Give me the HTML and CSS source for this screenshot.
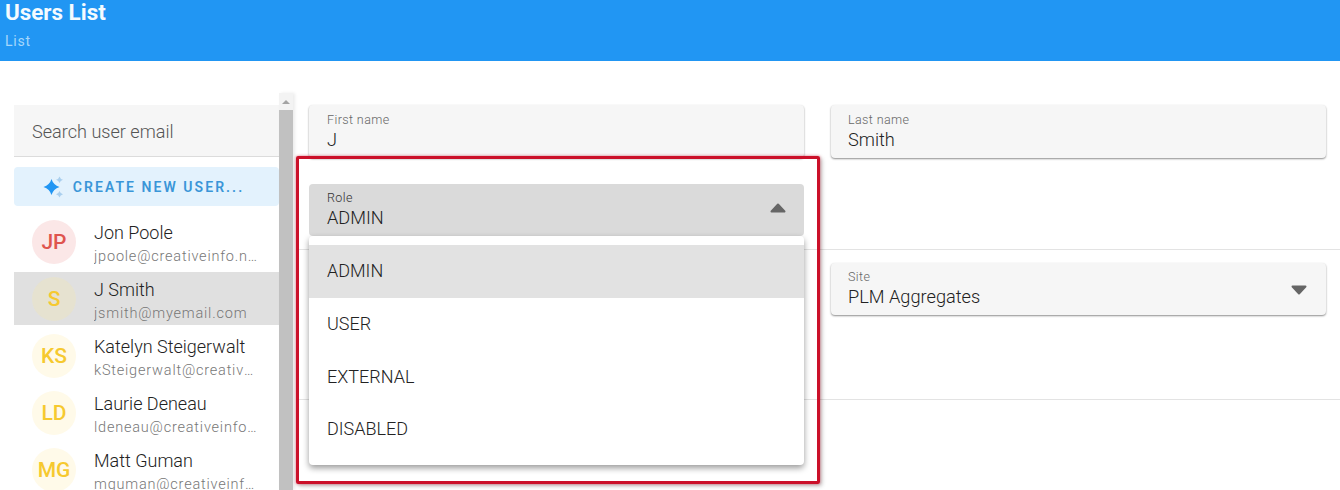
FILE: index.html
```html
<!DOCTYPE html>
<html lang="en">
<head>
<meta charset="utf-8">
<title>Users List</title>
<link rel="stylesheet" href="styles.css">
</head>
<body>
<header class="topbar">
  <h1 class="topbar-title">Users List</h1>
  <p class="topbar-sub">List</p>
</header>
<div class="page">
  <aside class="side">
    <div class="side-col">
      <div class="search">Search user email</div>
      <button class="create">
        <svg class="spark" viewBox="0 0 22 22" width="22" height="22" aria-hidden="true">
          <path class="spark-main" d="M9.5 3 Q11.2 8.8 17.5 11 Q11.2 13.2 9.5 19 Q7.8 13.2 1.5 11 Q7.8 8.8 9.5 3Z"/>
          <path class="spark-sub" d="M17.5 0.5 Q18.2 3 21 3.8 Q18.2 4.6 17.5 7.1 Q16.8 4.6 14 3.8 Q16.8 3 17.5 0.5Z"/>
          <path class="spark-sub" d="M17.5 15 Q18.2 17.4 21 18.2 Q18.2 19 17.5 21.5 Q16.8 19 14 18.2 Q16.8 17.4 17.5 15Z"/>
        </svg>
        <span>CREATE NEW USER...</span>
      </button>
      <ul class="users">
        <li class="user">
          <span class="avatar avatar-red">JP</span>
          <div class="user-text"><div class="user-name">Jon Poole</div><div class="user-mail">jpoole@creativeinfo.net</div></div>
        </li>
        <li class="user user-active">
          <span class="avatar avatar-yellow">S</span>
          <div class="user-text"><div class="user-name">J Smith</div><div class="user-mail">jsmith@myemail.com</div></div>
        </li>
        <li class="user">
          <span class="avatar avatar-yellow">KS</span>
          <div class="user-text"><div class="user-name">Katelyn Steigerwalt</div><div class="user-mail">kSteigerwalt@creativeinfo.net</div></div>
        </li>
        <li class="user">
          <span class="avatar avatar-yellow">LD</span>
          <div class="user-text"><div class="user-name">Laurie Deneau</div><div class="user-mail">ldeneau@creativeinfo.net</div></div>
        </li>
        <li class="user">
          <span class="avatar avatar-yellow">MG</span>
          <div class="user-text"><div class="user-name">Matt Guman</div><div class="user-mail">mguman@creativeinfo.net</div></div>
        </li>
      </ul>
    </div>
    <div class="scrollbar">
      <div class="scroll-btn"><span class="scroll-arrow"></span></div>
      <div class="scroll-thumb"></div>
    </div>
  </aside>
  <main class="main">
    <section class="section section-first">
      <div class="field field-top">
        <div>
          <span class="field-label">First name</span>
          <span class="field-value">J</span>
        </div>
      </div>
      <div class="field field-top field-right">
        <div>
          <span class="field-label">Last name</span>
          <span class="field-value">Smith</span>
        </div>
      </div>
      <div class="field field-open">
        <div>
          <span class="field-label">Role</span>
          <span class="field-value">ADMIN</span>
        </div>
        <svg class="caret caret-up" viewBox="0 0 16 10" width="16" height="10" aria-hidden="true"><path d="M8 1.5 L14.5 8.5 H1.5Z"/></svg>
        <ul class="menu">
          <li class="menu-item menu-item-active">ADMIN</li>
          <li class="menu-item">USER</li>
          <li class="menu-item">EXTERNAL</li>
          <li class="menu-item">DISABLED</li>
        </ul>
      </div>
    </section>
    <section class="section section-second">
      <div class="field field-site field-right">
        <div>
          <span class="field-label">Site</span>
          <span class="field-value">PLM Aggregates</span>
        </div>
        <svg class="caret caret-down" viewBox="0 0 16 10" width="16" height="10" aria-hidden="true"><path d="M8 8.5 L14.5 1.5 H1.5Z"/></svg>
      </div>
    </section>
    <div class="highlight"></div>
  </main>
</div>
</body>
</html>
```
FILE: styles.css
```css
* { box-sizing: border-box; }
html, body { margin: 0; height: 490px; overflow: hidden; background: #fff; }
body { font-family: Roboto, "Liberation Sans", sans-serif; color: #333; }
ul { list-style: none; margin: 0; padding: 0; }

.topbar { height: 61px; background: #2196f3; padding: 0 5px; }
.topbar-title { margin: 0; font-size: 22.4px; line-height: 25px; font-weight: 700; color: #f4fbff; }
.topbar-sub { margin: 8px 0 0; font-size: 14px; line-height: 16px; color: #a6d7fb; letter-spacing: .8px; }

.page { display: flex; height: 429px; }
.side { display: flex; margin-left: 14px; width: 279px; flex: none; }
.side-col { width: 265px; flex: none; padding-top: 44px; overflow: hidden; }

.search { height: 52px; background: #f6f6f6; border-bottom: 1px solid #dcdcdc; padding: 1px 18px 0; font-size: 18.1px; font-weight: 300; line-height: 52px; color: #555; }
.create { display: flex; align-items: center; justify-content: center; gap: 9px; width: 100%; height: 39px; margin-top: 10px; padding: 0 7px 0 0; border: 0; border-radius: 4px; background: #e3f2fd; color: #3a96d8; font: 600 14px Roboto, sans-serif; letter-spacing: 2.05px; }
.spark-main { fill: #2196f3; }
.spark-sub { fill: #a9cfee; }

.users { margin-top: 9px; display: flex; flex-direction: column; gap: 4px; }
.user { display: flex; align-items: center; height: 53px; padding: 0 18px; gap: 18px; }
.user-active { background: #e0e0e0; }
.avatar { flex: none; width: 44px; height: 44px; border-radius: 50%; display: flex; align-items: center; justify-content: center; font-size: 21px; font-weight: 500; }
.avatar-red { background: #fbe7e7; color: #df544e; }
.avatar-yellow { background: #fffae9; color: #f6c92f; }
.user-active .avatar { background: #e6e2d0; }
.user-text { min-width: 0; flex: 1; margin-right: 1px; padding-top: 4px; }
.user-name { font-size: 18px; font-weight: 300; line-height: 24px; color: #222; white-space: nowrap; }
.user-mail { font-size: 14.5px; font-weight: 300; line-height: 20px; margin-top: 2px; letter-spacing: .8px; color: #777; white-space: nowrap; overflow: hidden; text-overflow: ellipsis; }

.scrollbar { width: 14px; margin-top: 32px; background: #f3f3f3; display: flex; flex-direction: column; box-shadow: 2px 0 3px rgba(0,0,0,.08); }
.scroll-btn { height: 17px; display: flex; align-items: center; justify-content: center; }
.scroll-arrow { width: 0; height: 0; border-left: 4px solid transparent; border-right: 4px solid transparent; border-bottom: 4px solid #a3a3a3; }
.scroll-thumb { flex: 1; background: #c1c1c1; }

.main { flex: 1; position: relative; margin-left: 4px; min-width: 0; }
.section { display: grid; grid-template-columns: 495px 495px; column-gap: 27px; padding-left: 12px; border-bottom: 1px solid #e3e3e3; }
.section-first { padding-top: 44px; padding-bottom: 13px; row-gap: 26px; grid-template-rows: 53px 52px; }
.section-second { padding-top: 13px; padding-bottom: 84px; grid-auto-rows: 52px; }
.field-site { grid-column: 2; }

.field { position: relative; display: flex; align-items: center; justify-content: space-between; background: #f6f6f6; border-radius: 4px; padding: 0 18px; box-shadow: 0 1px 2px rgba(0,0,0,.45); }
.field-top { padding-top: 1px; }
.field-right { padding-left: 17px; }
.field-label, .field-value { display: block; white-space: nowrap; }
.field-label { font-size: 12.5px; font-weight: 300; line-height: 14px; letter-spacing: .4px; color: #666; }
.field-value { font-size: 18.2px; font-weight: 300; line-height: 22px; margin-top: 2px; color: #222; }
.field-open { background: #dadada; box-shadow: none; }
.field-open .field-label { color: #333; }
.caret { fill: #666; stroke: #666; stroke-width: 2; stroke-linejoin: round; flex: none; margin-right: 0; }
.caret-up { margin-top: -4px; }
.caret-down { margin-top: 2px; margin-right: 1px; }

.menu { position: absolute; left: 0; right: 0; top: 100%; padding: 9px 0; background: #fff; border-radius: 4px; box-shadow: 0 3px 6px rgba(0,0,0,.4); z-index: 2; }
.menu-item { height: 52.8px; padding: 0 18px; font-size: 18px; font-weight: 300; line-height: 52.8px; color: #222; }
.menu-item-active { background: #e2e2e2; }

.highlight { position: absolute; left: -1px; top: 95px; width: 524px; height: 328px; border: 3px solid #cb1029; border-radius: 2px; box-shadow: 0 0 3px rgba(207,15,42,.55), 2px 2px 4px rgba(0,0,0,.25); pointer-events: none; z-index: 3; }
```
